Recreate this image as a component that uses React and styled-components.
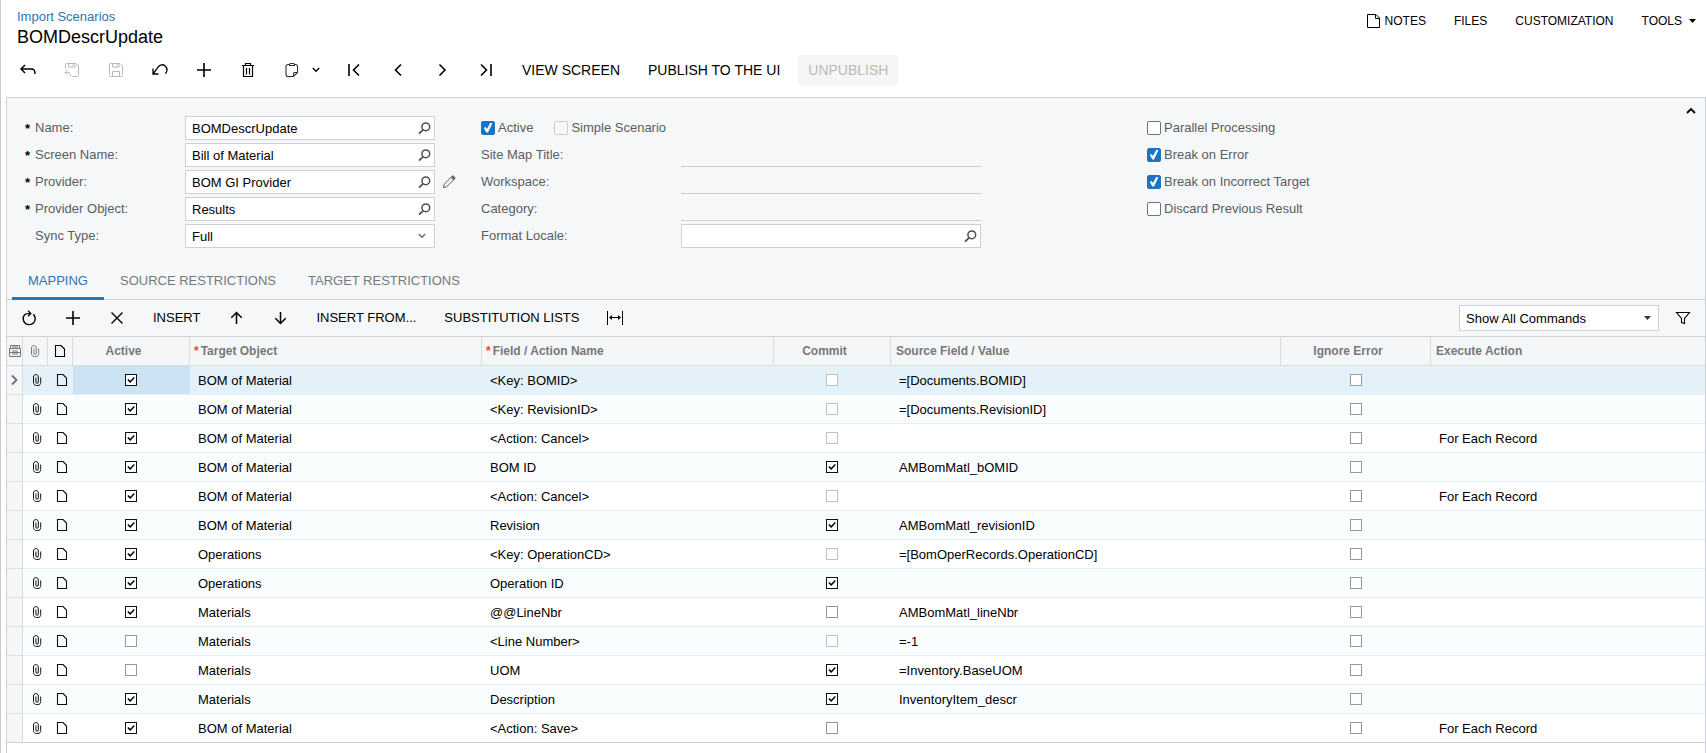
import {useState} from 'react';
import styled, {createGlobalStyle} from 'styled-components';

const mappingRows = [
    {active: true, target: 'BOM of Material', field: '<Key: BOMID>', commit: false, source: '=[Documents.BOMID]', locked: true},
    {active: true, target: 'BOM of Material', field: '<Key: RevisionID>', commit: false, source: '=[Documents.RevisionID]', locked: true},
    {active: true, target: 'BOM of Material', field: '<Action: Cancel>', commit: false, execute: 'For Each Record', locked: true},
    {active: true, target: 'BOM of Material', field: 'BOM ID', commit: true, source: 'AMBomMatl_bOMID'},
    {active: true, target: 'BOM of Material', field: '<Action: Cancel>', commit: false, execute: 'For Each Record', locked: true},
    {active: true, target: 'BOM of Material', field: 'Revision', commit: true, source: 'AMBomMatl_revisionID'},
    {active: true, target: 'Operations', field: '<Key: OperationCD>', commit: false, source: '=[BomOperRecords.OperationCD]', locked: true},
    {active: true, target: 'Operations', field: 'Operation ID', commit: true},
    {active: true, target: 'Materials', field: '@@LineNbr', commit: false, source: 'AMBomMatl_lineNbr'},
    {active: false, target: 'Materials', field: '<Line Number>', commit: false, source: '=-1', locked: true},
    {active: false, target: 'Materials', field: 'UOM', commit: true, source: '=Inventory.BaseUOM'},
    {active: true, target: 'Materials', field: 'Description', commit: true, source: 'InventoryItem_descr'},
    {active: true, target: 'BOM of Material', field: '<Action: Save>', commit: false, execute: 'For Each Record'},
];

const columnWidths = [16, 25, 25, 117, 292, 292, 117, 390, 150];

const tabs = ['MAPPING', 'SOURCE RESTRICTIONS', 'TARGET RESTRICTIONS'];

/* Icons */

const Icon = ({w = 16, h = 16, children, ...rest}) => (
    <Svg width={w} height={h} viewBox={`0 0 ${w} ${h}`} aria-hidden="true" {...rest}>{children}</Svg>
);

const BackIcon = () => <Icon><path d="M5 3 1 7l4 4M1 7h10.500c2.500 0 3.500 1 3.500 5" strokeWidth="1.500" /></Icon>;
const SaveCloseIcon = () => (
    <Icon>
        <path d="M1.500 6.500V2.500a1 1 0 0 1 1-1H12l2.500 2.500v9.500a1 1 0 0 1-1 1H8.500M4.500 1.500v3.500h6.500V1.500M9 2v1.500" />
        <path d="M3.500 8 1 10.500 3.500 13M1 10.500h3.500c1.500 0 2 1 2 4" />
    </Icon>
);
const SaveIcon = () => <Icon><path d="M2.500 1.500H12l2.500 2.500v9.500a1 1 0 0 1-1 1h-11a1 1 0 0 1-1-1v-11a1 1 0 0 1 1-1ZM4.500 1.500v3.500h6.500V1.500M9 2v1.500M4.500 14.500V9.500h7v5" /></Icon>;
const UndoIcon = () => <Icon><path d="M1 6.500v5.500h5.500M1.200 11.800 6 5.200C8 2.500 11 2 13.200 4c2.200 2.200 2.200 5.200.2 7.700" strokeWidth="1.300" /></Icon>;
const PlusIcon = () => <Icon><path d="M8 1v14M1 8h14" strokeWidth="1.600" /></Icon>;
const TrashIcon = () => <Icon><path d="M2 3.500h12M5.500 3.500v-2h5v2M3.500 3.500v11h9v-11M6.500 6v6.500M9.500 6v6.500" strokeWidth="1.200" /></Icon>;
const ClipboardIcon = () => <Icon w={14}><path d="M4 2.500H3a2 2 0 0 0-2 2v8a2 2 0 0 0 2 2h5.500l4-4v-6a2 2 0 0 0-2-2h-1M4.500 3.500V2.500a1 1 0 0 1 1-1h3a1 1 0 0 1 1 1v1zM8.500 14.500v-3a1 1 0 0 1 1-1h3" stroke="#333" strokeWidth="1.100" /></Icon>;
const MenuChevron = () => <Icon w={8} h={6}><path d="m.8 1 3.200 3.200L7.200 1" strokeWidth="1.400" /></Icon>;
const FirstIcon = () => <Icon><path d="M3 2v12M13 2.500 7.500 8l5.500 5.500" strokeWidth="1.600" /></Icon>;
const PrevIcon = () => <Icon><path d="M11 2.500 5.500 8l5.500 5.500" strokeWidth="1.600" /></Icon>;
const NextIcon = () => <Icon><path d="M5.500 2.500 11 8l-5.500 5.500" strokeWidth="1.600" /></Icon>;
const LastIcon = () => <Icon><path d="M3 2.500 8.500 8 3 13.500M13 2v12" strokeWidth="1.600" /></Icon>;
const NoteIcon = () => <Icon w={13} h={14}><path d="M.5.500h8.500l3.500 3.500v9.500H.5zM8.500.500V4.500h4" /></Icon>;
const PageIcon = () => <Icon w={12} h={12}><path d="M1.500.500h5.500l3.500 3.500v7.500h-9z" strokeWidth="1.100" /></Icon>;
const ClipIcon = () => <Icon w={10} h={12}><path d="M8.700 3.500v5c0 1.800-1 3-2.700 3H4.500C2.700 11.500 1.500 10.300 1.500 8.500V3C1.500 1.500 2.500.600 3.900.600S6.300 1.500 6.300 3v5c0 .8-.4 1.300-1.200 1.300S3.900 8.800 3.900 8V3.500" /></Icon>;
const LensIcon = () => <Icon w={13} h={13}><circle cx="7.800" cy="4.800" r="3.900" strokeWidth="1.500" /><path d="M5 7.800 1 11.600" strokeWidth="1.800" /></Icon>;
const PencilIcon = () => <Icon w={14} h={14}><path d="m1.500 12.500.7-3.200 7.500-7.800c1.800-1.500 4 .700 2.700 2.500l-7.700 7.700zM9 2.500 11.500 5" /><path d="m10 1.500 2.800 2.700" strokeWidth="1.800" /></Icon>;
const RefreshIcon = () => <Icon><path d="M12.300 4.300A6 6 0 1 1 3.600 4.800C4.800 3.600 6.500 3.300 9.500 3.400" strokeWidth="1.400" /><path d="m7 .700 2.800 2.700L7 6.200" strokeWidth="1.300" /></Icon>;
const CrossIcon = () => <Icon><path d="m2.500 2.500 11 11M13.500 2.500l-11 11" strokeWidth="1.400" /></Icon>;
const UpIcon = () => <Icon><path d="M8.500 14V2.500M3.300 7.700l5.200-5.200 5.200 5.200" strokeWidth="1.500" /></Icon>;
const DownIcon = () => <Icon><path d="M8.500 2v11.500M3.300 8.300l5.200 5.200 5.200-5.200" strokeWidth="1.500" /></Icon>;
const FitIcon = () => <Icon><path d="M.5 1v14M15.500 1v14M3 7.500h10" /><path d="m2 7.500 3-2.500v5zM14 7.500l-3-2.500v5z" fill="currentColor" stroke="none" /></Icon>;
const FilterIcon = () => <Icon><path d="M1.500 2.500h13L9.500 8.500v5l-3-1v-4z" strokeWidth="1.100" /></Icon>;
const CaretIcon = () => <Icon w={7} h={4}><path d="M0 0h7L3.500 4z" fill="currentColor" stroke="none" /></Icon>;
const CollapseIcon = () => <Icon w={10} h={8}><path d="m1 6 4-4 4 4" strokeWidth="1.800" /></Icon>;
const RowArrowIcon = () => <Icon w={8} h={12}><path d="m2 1.500 4.500 4.500L2 10.500" stroke="#6b6f73" strokeWidth="1.800" /></Icon>;
const LayoutIcon = () => <Icon w={12} h={12}><path d="M1.500 3.500V.500h9v3M.5 3.500h11v8H.5zM3 6h6M3 9h6" /><path d="M3 2h6M1 7.500h10" strokeWidth="1.200" /></Icon>;

/* Parts */

const Field = ({id, label, required, value, flat, indent, edit}) => (
    <FieldRow>
        <Label htmlFor={id} $indent={indent} $required={required}>{label}</Label>
        <ControlBox $flat={flat}>
            <TextInput id={id} defaultValue={value} readOnly={flat} />
            {!flat && <LookupButton aria-label={`Select ${label}`}><LensIcon /></LookupButton>}
        </ControlBox>
        {edit && <EditButton aria-label="Edit provider"><PencilIcon /></EditButton>}
    </FieldRow>
);

const Check = ({label, checked, disabled}) => (
    <CheckLabel>
        <FormCheckbox type="checkbox" defaultChecked={checked} disabled={disabled} />
        {label}
    </CheckLabel>
);

const App = () => {
    const [tab, setTab] = useState(0);

    return (
        <Page>
            <GlobalStyle />
            <Header>
                <div>
                    <ParentLink href="#scenarios">Import Scenarios</ParentLink>
                    <Title>BOMDescrUpdate</Title>
                </div>
                <HeaderMenu>
                    <MenuButton><NoteIcon />NOTES</MenuButton>
                    <MenuButton>FILES</MenuButton>
                    <MenuButton>CUSTOMIZATION</MenuButton>
                    <MenuButton $wide>TOOLS<CaretIcon /></MenuButton>
                </HeaderMenu>
            </Header>
            <Toolbar>
                <IconButton aria-label="Back"><BackIcon /></IconButton>
                <IconButton aria-label="Save and close" disabled><SaveCloseIcon /></IconButton>
                <IconButton aria-label="Save" disabled><SaveIcon /></IconButton>
                <IconButton aria-label="Undo"><UndoIcon /></IconButton>
                <IconButton aria-label="Add"><PlusIcon /></IconButton>
                <IconButton aria-label="Delete"><TrashIcon /></IconButton>
                <SplitButton aria-label="Clipboard"><ClipboardIcon /><MenuChevron /></SplitButton>
                <IconButton aria-label="First"><FirstIcon /></IconButton>
                <IconButton aria-label="Previous"><PrevIcon /></IconButton>
                <IconButton aria-label="Next"><NextIcon /></IconButton>
                <IconButton aria-label="Last"><LastIcon /></IconButton>
                <TextButton>VIEW SCREEN</TextButton>
                <TextButton>PUBLISH TO THE UI</TextButton>
                <UnpublishButton disabled>UNPUBLISH</UnpublishButton>
            </Toolbar>

            <Panel>
                <Form>
                    <Column $label={160} $control={250}>
                        <Field id="name" label="Name:" value="BOMDescrUpdate" required indent />
                        <Field id="screen" label="Screen Name:" value="Bill of Material" required indent />
                        <Field id="provider" label="Provider:" value="BOM GI Provider" required indent edit />
                        <Field id="object" label="Provider Object:" value="Results" required indent />
                        <FieldRow>
                            <Label htmlFor="sync" $indent>Sync Type:</Label>
                            <ControlBox>
                                <Select id="sync" defaultValue="Full">
                                    <option>Full</option>
                                </Select>
                                <SelectMark $muted><MenuChevron /></SelectMark>
                            </ControlBox>
                        </FieldRow>
                    </Column>
                    <Column $label={200} $control={300}>
                        <CheckRow>
                            <Check label="Active" checked />
                            <Check label="Simple Scenario" disabled />
                        </CheckRow>
                        <Field id="sitemap" label="Site Map Title:" flat />
                        <Field id="workspace" label="Workspace:" flat />
                        <Field id="category" label="Category:" flat />
                        <Field id="locale" label="Format Locale:" />
                    </Column>
                    <Column>
                        <CheckRow><Check label="Parallel Processing" /></CheckRow>
                        <CheckRow><Check label="Break on Error" checked /></CheckRow>
                        <CheckRow><Check label="Break on Incorrect Target" checked /></CheckRow>
                        <CheckRow><Check label="Discard Previous Result" /></CheckRow>
                    </Column>
                    <CollapseButton aria-label="Collapse"><CollapseIcon /></CollapseButton>
                </Form>

                <TabBar role="tablist">
                    {tabs.map((name, i) => (
                        <Tab key={name} role="tab" aria-selected={tab === i} $current={tab === i} onClick={() => setTab(i)}>{name}</Tab>
                    ))}
                </TabBar>

                <GridToolbar>
                    <IconButton aria-label="Refresh"><RefreshIcon /></IconButton>
                    <IconButton aria-label="Add row"><PlusIcon /></IconButton>
                    <IconButton aria-label="Delete row"><CrossIcon /></IconButton>
                    <TextButton $small>INSERT</TextButton>
                    <IconButton aria-label="Move up"><UpIcon /></IconButton>
                    <IconButton aria-label="Move down"><DownIcon /></IconButton>
                    <TextButton $small>INSERT FROM...</TextButton>
                    <TextButton $small>SUBSTITUTION LISTS</TextButton>
                    <IconButton aria-label="Fit to screen"><FitIcon /></IconButton>
                    <CommandFilter>
                        <Select aria-label="Commands" defaultValue="Show All Commands">
                            <option>Show All Commands</option>
                        </Select>
                        <SelectMark><CaretIcon /></SelectMark>
                    </CommandFilter>
                    <IconButton aria-label="Filter"><FilterIcon /></IconButton>
                </GridToolbar>

                <Table>
                    <colgroup>
                        {columnWidths.map((width, i) => <col key={i} width={width} />)}
                        <col />
                    </colgroup>
                    <thead>
                        <tr>
                            <Th $icon><LayoutIcon /></Th>
                            <Th $icon><ClipIcon /></Th>
                            <Th $icon $dark><PageIcon /></Th>
                            <Th $center>Active</Th>
                            <Th $required>Target Object</Th>
                            <Th $required>Field / Action Name</Th>
                            <Th $center>Commit</Th>
                            <Th>Source Field / Value</Th>
                            <Th $center>Ignore Error</Th>
                            <Th>Execute Action</Th>
                        </tr>
                    </thead>
                    <tbody>
                        {mappingRows.map((row, i) => (
                            <Row key={i} $selected={i === 0}>
                                <Gutter>{i === 0 && <RowArrowIcon />}</Gutter>
                                <IconCell><CellButton aria-label="Files"><ClipIcon /></CellButton></IconCell>
                                <IconCell><CellButton aria-label="Notes"><PageIcon /></CellButton></IconCell>
                                <CheckCell $focused={i === 0}>
                                    <GridCheckbox type="checkbox" aria-label="Active" defaultChecked={row.active} />
                                </CheckCell>
                                <Td>{row.target}</Td>
                                <Td>{row.field}</Td>
                                <CheckCell>
                                    <GridCheckbox type="checkbox" aria-label="Commit" defaultChecked={row.commit} disabled={row.locked} />
                                </CheckCell>
                                <Td>{row.source}</Td>
                                <CheckCell>
                                    <GridCheckbox type="checkbox" aria-label="Ignore error" />
                                </CheckCell>
                                <Td>{row.execute}</Td>
                            </Row>
                        ))}
                    </tbody>
                </Table>
            </Panel>
        </Page>
    );
}

const GlobalStyle = createGlobalStyle`
    * {
        box-sizing: border-box;
    }
    body {
        margin: 0;
        background: #fff;
        color: #000;
        font-family: "Liberation Sans", Arial, sans-serif;
        font-size: 13px;
    }
    button, input, select {
        font: inherit;
        color: inherit;
    }
    button {
        padding: 0;
        border: 0;
        background: none;
        cursor: pointer;
    }
`

const Svg = styled.svg`
    display: block;
    flex: none;
    fill: none;
    stroke: currentColor;
`

const Page = styled.div`
    display: flex;
    flex-direction: column;
    min-height: 100vh;
    padding-left: 5px;
    border-left: 1px solid #c9cbcd;
`

const Header = styled.header`
    display: flex;
    justify-content: space-between;
    padding: 7px 10px 0 11px;
`

const ParentLink = styled.a`
    display: block;
    line-height: 20px;
    color: #2a75b8;
    text-decoration: none;
`

const Title = styled.h1`
    margin: 0;
    font-size: 18px;
    font-weight: 400;
    line-height: 20px;
`

const HeaderMenu = styled.nav`
    display: flex;
    align-items: flex-start;
    gap: 28px;
`

const MenuButton = styled.button`
    display: flex;
    align-items: center;
    gap: ${({$wide}) => ($wide ? 7 : 5)}px;
    height: 28px;
    font-size: 12px;
`

const Toolbar = styled.div`
    display: flex;
    align-items: center;
    padding: 8px 0 12px;
`

const IconButton = styled.button`
    display: flex;
    align-items: center;
    justify-content: center;
    width: 44px;
    height: 30px;
    &:disabled {
        color: #b9b9b9;
    }
`

const SplitButton = styled(IconButton)`
    justify-content: flex-start;
    gap: 13px;
    width: 62px;
    padding-left: 15px;
`

const TextButton = styled.button`
    height: 30px;
    padding: ${({$small}) => ($small ? '0 14px 2px' : '0 14px')};
    font-size: ${({$small}) => ($small ? 13 : 14)}px;
    white-space: nowrap;
`

const UnpublishButton = styled(TextButton)`
    margin-left: 4px;
    padding: 0 10px;
    border-radius: 2px;
    background: #f6f6f6;
    color: #b9b9b9;
`

const Panel = styled.main`
    flex: 1;
    border: 1px solid #cdd1d5;
    border-bottom: 0;
`

const Form = styled.section`
    display: flex;
    padding: 18px 9px 16px 18px;
    background: #f5f7f9;
    color: #5a5d60;
`

const Column = styled.div`
    --label: ${({$label}) => $label || 0}px;
    --control: ${({$control}) => $control || 0}px;
    display: flex;
    flex-direction: column;
    gap: 3px;
    &:nth-child(1) {
        width: 456px;
    }
    &:nth-child(2) {
        width: 666px;
    }
`

const FieldRow = styled.div`
    display: flex;
    height: 24px;
`

const Label = styled.label`
    display: flex;
    width: var(--label);
    line-height: 23px;
    &::before {
        content: "${({$required}) => ($required ? '*' : '')}";
        width: ${({$indent}) => ($indent ? 10 : 0)}px;
        color: #000;
        font-weight: 700;
        line-height: 26px;
    }
`

const ControlBox = styled.div`
    position: relative;
    display: flex;
    width: var(--control);
    border: 1px solid #cdd1d5;
    border-width: ${({$flat}) => ($flat ? '0 0 1px' : '1px')};
    background: ${({$flat}) => ($flat ? 'transparent' : '#fff')};
    color: #000;
`

const TextInput = styled.input`
    flex: 1;
    min-width: 0;
    padding: 0 6px;
    border: 0;
    outline: 0;
    background: transparent;
`

const LookupButton = styled.button`
    display: flex;
    align-items: center;
    padding: 0 3px 0 4px;
    color: #4c4f52;
`

const EditButton = styled.button`
    display: flex;
    align-items: center;
    padding-left: 7px;
    color: #5a5d60;
`

const Select = styled.select`
    flex: 1;
    padding: 0 6px;
    border: 0;
    outline: 0;
    appearance: none;
    background: transparent;
`

/* sits over the right end of a select */
const SelectMark = styled.span`
    position: absolute;
    inset: 0 ${({$muted}) => ($muted ? 8 : 7)}px 0 auto;
    display: flex;
    align-items: center;
    color: ${({$muted}) => ($muted ? '#6c6f72' : '#333')};
    pointer-events: none;
`

const CheckRow = styled.div`
    display: flex;
    gap: 21px;
    height: 24px;
    padding-bottom: 1px;
`

const CheckLabel = styled.label`
    display: flex;
    align-items: center;
    gap: 3px;
    line-height: 22px;
    white-space: nowrap;
`

const FormCheckbox = styled.input`
    display: grid;
    place-items: center;
    width: 14px;
    height: 14px;
    margin: 0;
    border: 1px solid #6f7275;
    border-radius: 2px;
    appearance: none;
    background: #fff;
    &:disabled {
        border-color: #cfcfcf;
        background: #f8f8f8;
    }
    &:checked {
        border-color: #1a73c4;
        background: #1a73c4;
    }
    &:checked::after {
        content: "";
        width: 10px;
        height: 10px;
        background: #fff;
        clip-path: polygon(8% 54%, 26% 46%, 40% 66%, 74% 0, 94% 8%, 50% 100%, 34% 100%);
    }
`

const CollapseButton = styled.button`
    align-self: flex-start;
    height: 8px;
    margin: -9px 0 0 auto;
    color: #000;
`

const TabBar = styled.div`
    display: flex;
    padding-left: 5px;
    background: #f5f7f9;
    box-shadow: inset 0 -1px #cdd1d5;
`

const Tab = styled.button`
    height: 36px;
    padding: 0 16px;
    border-bottom: 3px solid ${({$current}) => ($current ? '#2a75b8' : 'transparent')};
    color: ${({$current}) => ($current ? '#2a75b8' : '#76797c')};
    white-space: nowrap;
`

const GridToolbar = styled.div`
    display: flex;
    align-items: center;
    height: 37px;
    border-bottom: 1px solid #cdd1d5;
    background: #f5f7f8;
`

const CommandFilter = styled.div`
    position: relative;
    display: flex;
    width: 200px;
    height: 26px;
    margin: 0 2px 0 auto;
    border: 1px solid #cdd1d5;
    background: #fff;
`

const Table = styled.table`
    width: 100%;
    table-layout: fixed;
    border-spacing: 0;
`

const Th = styled.th`
    height: 29px;
    padding: ${({$icon, $center, $required}) => ($icon ? '0' : $center ? '0 15px 0 0' : $required ? '0 4px' : '0 5px')};
    border-right: 1px solid #d9dcdf;
    border-bottom: 1px solid #d9dcdf;
    background: #f5f6f8;
    color: ${({$dark}) => ($dark ? '#000' : '#75787b')};
    font-size: 12px;
    text-align: ${({$center}) => ($center ? 'center' : 'left')};
    white-space: nowrap;
    &:last-child {
        border-right: 0;
    }
    &::before {
        content: "${({$required}) => ($required ? '*' : '')}";
        margin-right: ${({$required}) => ($required ? 2 : 0)}px;
        color: #e0491f;
    }
    ${Svg} {
        margin: 0 auto;
    }
`

const Td = styled.td`
    height: 29px;
    padding: 0 8px;
    border-bottom: 1px solid #e6f1f7;
    overflow: hidden;
    white-space: nowrap;
`

const Gutter = styled(Td)`
    padding: 0 0 0 3px;
    border-right: 1px solid #d9dcdf;
    border-bottom-color: #dfe2e5;
    background: #f5f6f8;
`

const IconCell = styled(Td)`
    padding: 0 0 0 9px;
    & + & {
        padding-left: 8px;
    }
`

const CellButton = styled.button`
    display: block;
    color: #111;
`

const CheckCell = styled(Td)`
    padding: 0 1px 0 0;
    background: ${({$focused}) => ($focused ? '#cbe2f2' : 'transparent')};
`

const Row = styled.tr`
    background: ${({$selected}) => ($selected ? '#e5f1f9' : '#fff')};
    &:nth-child(even) {
        background: #fafdfe;
    }
    &:last-child > td {
        border-bottom-color: #cdd1d5;
    }
`

const GridCheckbox = styled.input`
    display: grid;
    place-items: center;
    width: 12px;
    height: 12px;
    margin: 0 auto;
    border: 1px solid #96999c;
    appearance: none;
    background: #fff;
    &:disabled {
        border-color: #bfc2c5;
    }
    &:checked {
        border-color: #111;
    }
    &:checked::after {
        content: "";
        width: 8px;
        height: 8px;
        background: #000;
        clip-path: polygon(4% 50%, 18% 38%, 40% 60%, 86% 12%, 98% 26%, 40% 86%);
    }
`

export default App;
